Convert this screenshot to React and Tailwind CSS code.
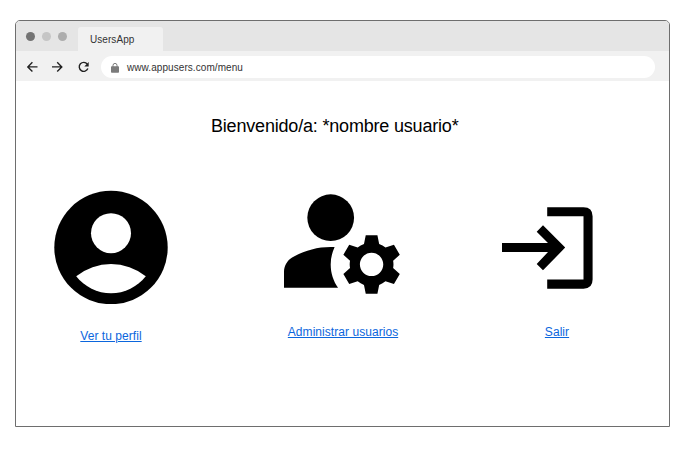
import React from 'react';

function TabStrip() {
  return (
    <div className="flex h-[30px] items-end bg-[#e5e5e5]">
      <div className="flex h-[30px] w-[62px] items-center gap-[7px] pl-[10px] pt-px">
        <span className="size-[9px] rounded-full bg-[#737373]" />
        <span className="size-[9px] rounded-full bg-[#c5c5c5]" />
        <span className="size-[9px] rounded-full bg-[#adadad]" />
      </div>
      <div className="flex h-[24px] w-[85px] items-center rounded-t-[3px] bg-[#f1f1f1] pl-[12px] pt-[2px] text-[10px] leading-3 tracking-[0.06px] text-[#333]">
        <span>UsersApp</span>
      </div>
    </div>
  );
}

function Toolbar() {
  return (
    <div className="flex h-[30px] items-center bg-[#f1f1f1] pt-[2px]">
      <svg className="ml-[6px] h-[16px] w-[74px] shrink-0" viewBox="22 59.5 74 16" fill="none" stroke="#222" strokeWidth="1.4">
        <path d="M37.5 67.4H28M32.4 62.8L27.8 67.4L32.4 72" />
        <path d="M52 67.4H61.5M57.2 62.8L61.8 67.4L57.2 72" />
        <path d="M87.3 64.6A4.5 4.5 0 1 0 87.9 69.1" />
        <path d="M88.7 62.6V67H84.3Z" fill="#222" stroke="none" />
      </svg>
      <div className="ml-[5px] flex h-[22px] w-[554px] items-center rounded-full bg-white pl-[10px] pt-px text-[10px] leading-3 tracking-[0.07px] text-[#333]">
        <svg className="mr-[8px] h-[10px] w-[8px]" viewBox="0 0 8 10">
          <rect y="3.3" width="8" height="6.5" rx="0.8" fill="#7b7b7b" />
          <path d="M2 4V2.4a2 2 0 0 1 4 0V4" fill="none" stroke="#7b7b7b" />
        </svg>
        <span>www.appusers.com/menu</span>
      </div>
    </div>
  );
}

function MenuLink({ children }) {
  return (
    <a href="#" className="text-[12px] leading-[14px] tracking-[0.05px] text-[#0b66dd] underline">
      {children}
    </a>
  );
}

export default function App() {
  return (
    <div className="h-[452px] w-[689px] bg-white pl-[15px] pt-[20px] font-['Liberation_Sans',Arial,sans-serif]">
      <div className="h-[407px] w-[655px] overflow-hidden rounded-t-[5px] border border-[#6e6e6e] bg-white">
        <TabStrip />
        <Toolbar />
        <h1 className="ml-[195px] mt-[35px] text-[18px] leading-[20px] tracking-[-0.19px] text-black">Bienvenido/a: *nombre usuario*</h1>
        <div className="mt-[54px] flex items-start pl-[38px]">
          <div className="flex w-[114px] flex-col items-center">
            <svg className="h-[114px] w-[114px]" viewBox="54 190 114 114">
              <circle cx="111" cy="247.5" r="56.7" />
              <circle cx="111" cy="233.2" r="20" fill="#fff" />
              <path d="M76.2 276.2A56 56 0 0 1 145.8 276.2A44 44 0 0 1 76.2 276.2Z" fill="#fff" />
            </svg>
            <div className="mt-[25px] flex"><MenuLink>Ver tu perfil</MenuLink></div>
          </div>
          <div className="ml-[116px] flex w-[118px] flex-col items-center">
            <svg className="h-[114px] w-[118px]" viewBox="284 190 118 114">
              <g transform="translate(272.3 171) scale(5.84)">
                <circle cx="10" cy="8" r="4" />
                <path d="M10.67 13.02C10.45 13.01 10.23 13 10 13c-2.42 0-4.68.67-6.61 1.82-.88.52-1.39 1.5-1.39 2.53V20h9.26c-.79-1.13-1.26-2.51-1.26-4 0-1.07.25-2.07.67-2.98z" />
                <path d="M20.75 16c0-.22-.03-.42-.06-.63l1.14-1.01-1-1.73-1.45.49c-.32-.27-.68-.48-1.08-.63L18 11h-2l-.3 1.49c-.4.15-.76.36-1.08.63l-1.45-.49-1 1.73 1.14 1.01c-.03.21-.06.41-.06.63s.03.42.06.63l-1.14 1.01 1 1.73 1.45-.49c.32.27.68.48 1.08.63L16 21h2l.3-1.49c.4-.15.76-.36 1.08-.63l1.45.49 1-1.73-1.14-1.01c.03-.21.06-.41.06-.63zM17 18c-1.1 0-2-.9-2-2s.9-2 2-2 2 .9 2 2-.9 2-2 2z" />
              </g>
            </svg>
            <div className="mt-[21px] flex"><MenuLink>Administrar usuarios</MenuLink></div>
          </div>
          <div className="ml-[100px] flex w-[110px] flex-col items-center">
            <svg className="h-[114px] w-[110px]" viewBox="502 190 110 114">
              <path d="M502 243H548L536.7 231.7L543 225.3L565.2 247.6L543 270.3L536.7 264L548 252H502Z" />
              <path d="M547.2 207.2H583.5Q592.6 207.2 592.6 216.3V279.6Q592.6 288.7 583.5 288.7H547.2V279.6H583.5V216.3H547.2Z" />
            </svg>
            <div className="mt-[21px] flex"><MenuLink>Salir</MenuLink></div>
          </div>
        </div>
      </div>
    </div>
  );
}
